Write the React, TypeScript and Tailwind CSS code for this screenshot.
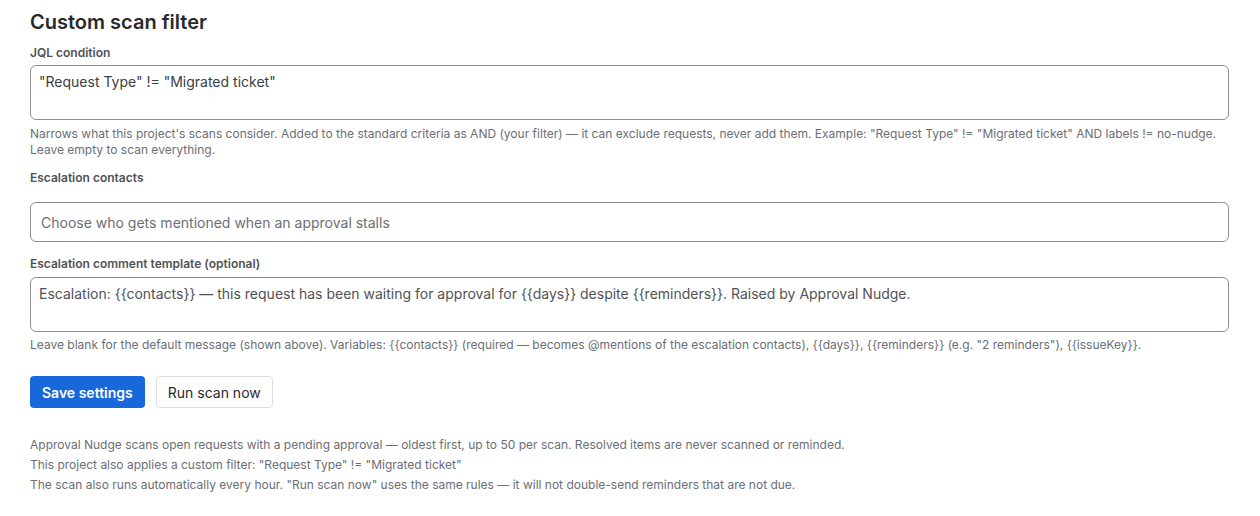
export default function App() {
  return (
    <div className="min-h-screen bg-white px-[30px] pt-[10px] text-[#292a2e]" style={{ fontFamily: "Inter, 'Noto Sans', sans-serif" }}>
      <h2 className="text-[20px] font-semibold leading-[24px]">Custom scan filter</h2>

      <label className="mt-[11px] block text-[12px] font-semibold leading-[16px] text-[#505258]">JQL condition</label>
      <textarea
        className="mt-[4px] block h-[55px] w-[1199px] resize-none rounded-[6px] border border-[#8c8f97] px-[8px] py-[6px] text-[14px] leading-[20px] text-[#3b3d42] outline-none"
        defaultValue={'"Request Type" != "Migrated ticket"'}
      />
      <p className="mt-[6px] text-[12px] leading-[16px] text-[#6b6e76]">
        Narrows what this project's scans consider. Added to the standard criteria as AND (your filter) — it can exclude requests, never add them. Example: "Request Type" != "Migrated ticket" AND labels != no-nudge. Leave empty to scan everything.
      </p>

      <label className="mt-[12px] block text-[12px] font-semibold leading-[16px] text-[#505258]">Escalation contacts</label>
      <div className="mt-[16px] flex h-[40px] w-[1199px] items-center rounded-[6px] border border-[#8c8f97] px-[10px] text-[14px] text-[#6b6e76]">
        Choose who gets mentioned when an approval stalls
      </div>

      <label className="mt-[14px] block text-[12px] font-semibold leading-[16px] text-[#505258]">Escalation comment template (optional)</label>
      <textarea
        className="mt-[5px] block h-[55px] w-[1199px] resize-none rounded-[6px] border border-[#8c8f97] px-[8px] py-[6px] text-[14px] leading-[20px] text-[#505258] outline-none"
        defaultValue={'Escalation: {{contacts}} — this request has been waiting for approval for {{days}} despite {{reminders}}. Raised by Approval Nudge.'}
      />
      <p className="mt-[5px] text-[12px] leading-[16px] text-[#6b6e76]">
        Leave blank for the default message (shown above). Variables: {'{{contacts}}'} (required — becomes @mentions of the escalation contacts), {'{{days}}'}, {'{{reminders}}'} (e.g. "2 reminders"), {'{{issueKey}}'}.
      </p>

      <div className="mt-[23px] flex gap-[11px]">
        <button className="h-[32px] rounded-[4px] bg-[#1868db] px-[12px] text-[14px] font-semibold text-white">Save settings</button>
        <button className="h-[32px] rounded-[4px] border border-[#dddee1] bg-white px-[11px] text-[14px] font-normal text-[#292a2e]">Run scan now</button>
      </div>

      <div className="mt-[27px] text-[12px] leading-[20px] text-[#6b6e76]">
        <p>Approval Nudge scans open requests with a pending approval — oldest first, up to 50 per scan. Resolved items are never scanned or reminded.</p>
        <p>This project also applies a custom filter: "Request Type" != "Migrated ticket"</p>
        <p>The scan also runs automatically every hour. "Run scan now" uses the same rules — it will not double-send reminders that are not due.</p>
      </div>
    </div>
  );
}
